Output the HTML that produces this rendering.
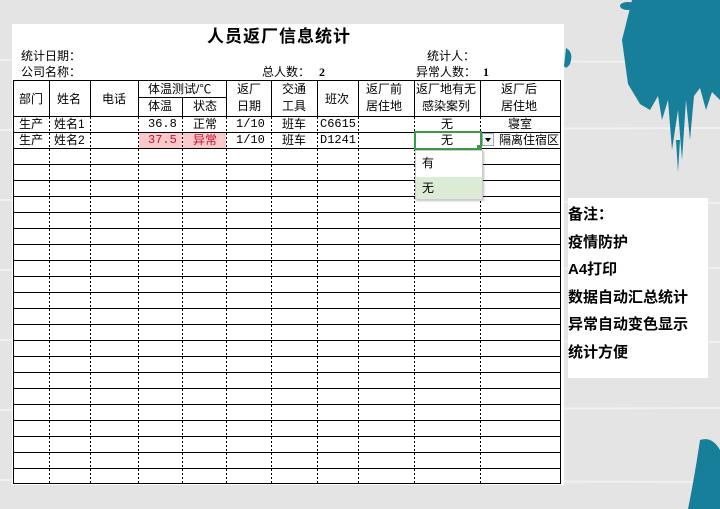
<!DOCTYPE html>
<html><head><meta charset="utf-8"><style>
html,body{margin:0;padding:0;width:720px;height:509px;overflow:hidden;background:#e6e6e6;}
body{position:relative;font-family:"Liberation Sans","Noto Sans CJK SC",sans-serif;}
.t{position:absolute;font-size:12px;color:#000;white-space:nowrap;line-height:14px;}
</style></head><body>
<svg width="720" height="509" style="position:absolute;left:0;top:0">
 <rect width="720" height="509" fill="#e4e4e4"/>
 <g stroke="#f4f4f4" stroke-width="2" opacity=".8">
  <line x1="0" y1="60" x2="720" y2="62"/><line x1="0" y1="130" x2="720" y2="128"/><line x1="0" y1="200" x2="720" y2="203"/>
  <line x1="0" y1="270" x2="720" y2="268"/><line x1="0" y1="340" x2="720" y2="342"/><line x1="0" y1="410" x2="720" y2="408"/><line x1="0" y1="480" x2="720" y2="482"/>
 </g>
 <g fill="#177f9a">
  <path d="M632 0 L720 0 L720 100 L712 92 L706 110 L700 88 L694 96 L690 140 L686 100 L682 160 L678 110 L672 150 L668 100 L662 120 L658 96 L650 110 L640 104 L628 84 L622 40 Z"/>
  <path d="M566 48 Q574 52 570 64 Q566 70 564 66 Z"/>
  <ellipse cx="628" cy="6" rx="8" ry="4"/><ellipse cx="627" cy="42" rx="4" ry="6"/>
  <path d="M676 140 L680 140 L678 172 Z"/>
  <path d="M700 440 Q712 436 720 450 L720 509 L688 509 Q694 480 700 440 Z"/>
 </g>
 <rect x="12" y="24" width="552" height="461" fill="#fff"/>
 <rect x="568" y="198" width="140" height="180" fill="#fff"/>
 <rect x="139" y="133" width="43" height="15" fill="#fbc8cc"/>
 <rect x="183" y="133" width="43" height="15" fill="#fbc8cc"/>
 <g stroke="#000" stroke-width="1" shape-rendering="crispEdges">
  <rect x="13.5" y="80.5" width="547" height="403" fill="none"/>
  <line x1="138" y1="97.5" x2="226" y2="97.5"/>
  <line x1="13" y1="116.5" x2="561" y2="116.5"/>
 </g>
 <g stroke="#000" stroke-width="1" shape-rendering="crispEdges" id="hl"></g>
 <g stroke="#000" stroke-width="1" shape-rendering="crispEdges" id="vl"></g>
</svg>
<script>
var hl=document.getElementById('hl'),vl=document.getElementById('vl'),ns='http://www.w3.org/2000/svg';
for(var y=132;y<=468;y+=16){var l=document.createElementNS(ns,'line');l.setAttribute('x1',13);l.setAttribute('x2',561);l.setAttribute('y1',y+.5);l.setAttribute('y2',y+.5);hl.appendChild(l);}
var xs=[49,90,138,182,226,271,317,358,414,480];
xs.forEach(function(x){
 var top=(x==182)?97:80;
 var a=document.createElementNS(ns,'line');a.setAttribute('x1',x+.5);a.setAttribute('x2',x+.5);a.setAttribute('y1',top);a.setAttribute('y2',116);vl.appendChild(a);
 var b=document.createElementNS(ns,'line');b.setAttribute('x1',x+.5);b.setAttribute('x2',x+.5);b.setAttribute('y1',117);b.setAttribute('y2',484);b.setAttribute('stroke-dasharray','2,2');vl.appendChild(b);
});
</script>
<div class="t" style="left:207px;top:27px;font-size:17px;font-weight:bold;line-height:20px;letter-spacing:1px">人员返厂信息统计</div>
<div class="t" style="left:21px;top:49px">统计日期：</div>
<div class="t" style="left:21px;top:65px">公司名称：</div>
<div class="t" style="left:262px;top:65px">总人数：</div>
<div class="t" style="left:319px;top:65px;font-weight:bold;font-family:'Liberation Serif',serif">2</div>
<div class="t" style="left:427px;top:49px">统计人：</div>
<div class="t" style="left:416px;top:65px">异常人数：</div>
<div class="t" style="left:483px;top:65px;font-weight:bold;font-family:'Liberation Serif',serif">1</div>

<div class="t" style="left:19px;top:92px">部门</div>
<div class="t" style="left:57px;top:92px">姓名</div>
<div class="t" style="left:102px;top:92px">电话</div>
<div class="t" style="left:148px;top:82px">体温测试/℃</div>
<div class="t" style="left:148px;top:99px">体温</div>
<div class="t" style="left:193px;top:99px">状态</div>
<div class="t" style="left:237px;top:82px">返厂</div>
<div class="t" style="left:237px;top:99px">日期</div>
<div class="t" style="left:282px;top:82px">交通</div>
<div class="t" style="left:282px;top:99px">工具</div>
<div class="t" style="left:325px;top:92px">班次</div>
<div class="t" style="left:366px;top:82px">返厂前</div>
<div class="t" style="left:366px;top:99px">居住地</div>
<div class="t" style="left:416px;top:82px">返厂地有无</div>
<div class="t" style="left:422px;top:99px">感染案列</div>
<div class="t" style="left:501px;top:82px">返厂后</div>
<div class="t" style="left:501px;top:99px">居住地</div>

<div class="t" style="left:19px;top:117px">生产</div>
<div class="t" style="left:54px;top:117px">姓名1</div>
<div class="t" style="left:148px;top:117px;font-family:'Liberation Mono',monospace">36.8</div>
<div class="t" style="left:193px;top:117px">正常</div>
<div class="t" style="left:236px;top:117px;font-family:'Liberation Mono',monospace">1/10</div>
<div class="t" style="left:282px;top:117px">班车</div>
<div class="t" style="left:320px;top:117px;font-family:'Liberation Mono',monospace">C6615</div>
<div class="t" style="left:441px;top:117px">无</div>
<div class="t" style="left:508px;top:117px">寝室</div>

<div class="t" style="left:19px;top:133px">生产</div>
<div class="t" style="left:54px;top:133px">姓名2</div>
<div class="t" style="left:148px;top:133px;font-family:'Liberation Mono',monospace;color:#c0142c">37.5</div>
<div class="t" style="left:193px;top:133px;color:#c0142c">异常</div>
<div class="t" style="left:236px;top:133px;font-family:'Liberation Mono',monospace">1/10</div>
<div class="t" style="left:282px;top:133px">班车</div>
<div class="t" style="left:320px;top:133px;font-family:'Liberation Mono',monospace">D1241</div>
<div class="t" style="left:490px;top:133px;width:69px;overflow:hidden;direction:rtl">隔离住宿区</div>

<div style="position:absolute;left:414px;top:131px;width:64px;height:15px;border:2px solid #3e9b45;background:#fff"></div>
<div style="position:absolute;left:477px;top:145px;width:4px;height:4px;background:#3e9b45"></div>
<div class="t" style="left:441px;top:133px">无</div>
<div style="position:absolute;left:482px;top:133px;width:12px;height:13px;background:#f4f4f4;border:1px solid #9ab;box-sizing:border-box"></div>
<div style="position:absolute;left:485px;top:138px;width:0;height:0;border-left:3px solid transparent;border-right:3px solid transparent;border-top:4px solid #000"></div>
<div style="position:absolute;left:415px;top:150px;width:68px;height:50px;background:#fff;border:1px solid #ccc;box-sizing:border-box;box-shadow:1px 1px 2px rgba(0,0,0,.25)"></div>
<div style="position:absolute;left:416px;top:177px;width:66px;height:22px;background:#dcebd5"></div>
<div class="t" style="left:422px;top:156px">有</div>
<div class="t" style="left:422px;top:181px">无</div>

<div style="position:absolute;left:568px;top:201px;font-size:15px;font-weight:bold;line-height:27.5px;white-space:nowrap">备注：<br>疫情防护<br>A4打印<br>数据自动汇总统计<br>异常自动变色显示<br>统计方便</div>
</body></html>
